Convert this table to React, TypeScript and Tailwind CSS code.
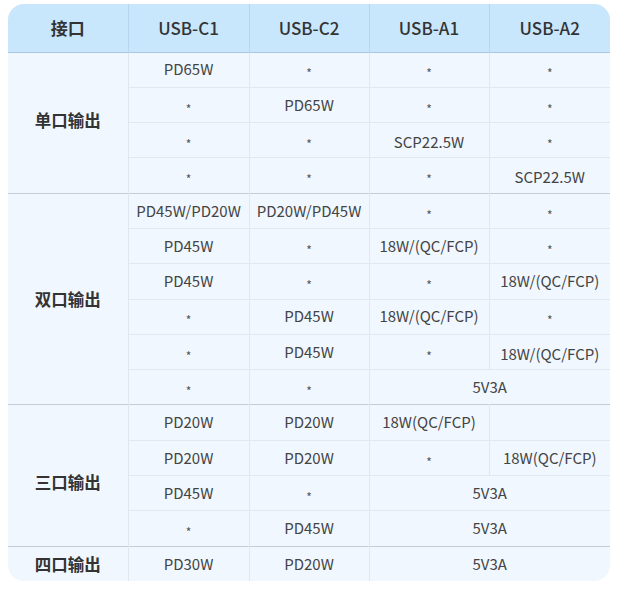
type Cell = { t: string; span?: number; low?: boolean };

const groups: { label: string; rows: Cell[][]; labelPad?: string }[] = [
  {
    label: '单口输出',
    labelPad: 'pb-[4px]',
    rows: [
      [{ t: 'PD65W' }, { t: '*' }, { t: '*' }, { t: '*' }],
      [{ t: '*' }, { t: 'PD65W' }, { t: '*' }, { t: '*' }],
      [{ t: '*' }, { t: '*' }, { t: 'SCP22.5W', low: true }, { t: '*' }],
      [{ t: '*' }, { t: '*' }, { t: '*' }, { t: 'SCP22.5W', low: true }],
    ],
  },
  {
    label: '双口输出',
    rows: [
      [{ t: 'PD45W/PD20W' }, { t: 'PD20W/PD45W' }, { t: '*' }, { t: '*' }],
      [{ t: 'PD45W' }, { t: '*' }, { t: '18W/(QC/FCP)' }, { t: '*' }],
      [{ t: 'PD45W' }, { t: '*' }, { t: '*' }, { t: '18W/(QC/FCP)' }],
      [{ t: '*' }, { t: 'PD45W' }, { t: '18W/(QC/FCP)' }, { t: '*' }],
      [{ t: '*' }, { t: 'PD45W' }, { t: '*' }, { t: '18W/(QC/FCP)', low: true }],
      [{ t: '*' }, { t: '*' }, { t: '5V3A', span: 2 }],
    ],
  },
  {
    label: '三口输出',
    labelPad: 'pt-[14px]',
    rows: [
      [{ t: 'PD20W' }, { t: 'PD20W' }, { t: '18W(QC/FCP)' }, { t: '' }],
      [{ t: 'PD20W' }, { t: 'PD20W' }, { t: '*' }, { t: '18W(QC/FCP)' }],
      [{ t: 'PD45W' }, { t: '*' }, { t: '5V3A', span: 2 }],
      [{ t: '*' }, { t: 'PD45W' }, { t: '5V3A', span: 2 }],
    ],
  },
  {
    label: '四口输出',
    rows: [[{ t: 'PD30W' }, { t: 'PD20W' }, { t: '5V3A', span: 2 }]],
  },
];

const headers = ['接口', 'USB-C1', 'USB-C2', 'USB-A1', 'USB-A2'];

export default function App() {
  return (
    <div
      className="min-h-screen bg-white pt-[4px] pl-[8px]"
      style={{ fontFamily: '"Noto Sans CJK SC", "Noto Sans", sans-serif' }}
    >
      <div className="w-[602px] rounded-[16px] overflow-hidden bg-[#f0f7fe]">
        <table className="w-full table-fixed border-collapse">
          <colgroup>
            <col className="w-[120px]" />
            <col className="w-[121px]" />
            <col className="w-[120px]" />
            <col className="w-[120px]" />
            <col className="w-[121px]" />
          </colgroup>
          <thead>
            <tr className="h-[48px] bg-[#c8e6fc] border-b border-[#a9c8e2]">
              {headers.map((h, i) => (
                <th
                  key={h}
                  className={`text-[17px] text-[#333] text-center ${
                    i > 0 ? 'border-l border-[#b7d6ee] font-medium' : 'font-bold'
                  }`}
                >
                  {h}
                </th>
              ))}
            </tr>
          </thead>
          <tbody>
            {groups.map((g, gi) =>
              g.rows.map((row, ri) => (
                <tr
                  key={`${gi}-${ri}`}
                  className={`h-[35.3px] ${
                    ri === 0
                      ? gi === 0
                        ? ''
                        : 'border-t border-[#c6cdd8]'
                      : 'border-t border-[#e0e8f1]'
                  }`}
                >
                  {ri === 0 && (
                    <td
                      rowSpan={g.rows.length}
                      className={`text-center text-[16.5px] font-bold text-[#333] ${g.labelPad ?? ''}`}
                    >
                      {g.label}
                    </td>
                  )}
                  {row.map((c, ci) => (
                    <td
                      key={ci}
                      colSpan={c.span}
                      className={`border-l border-[#dfe7ef] text-center text-[15px] text-[#444] p-0 whitespace-nowrap ${
                        c.low ? 'pt-[4px]' : ''
                      }`}
                    >
                      {c.t === '*' ? (
                        <span className="inline-block text-[12px] text-[#555] translate-y-[3px]">*</span>
                      ) : (
                        c.t
                      )}
                    </td>
                  ))}
                </tr>
              ))
            )}
          </tbody>
        </table>
      </div>
    </div>
  );
}
